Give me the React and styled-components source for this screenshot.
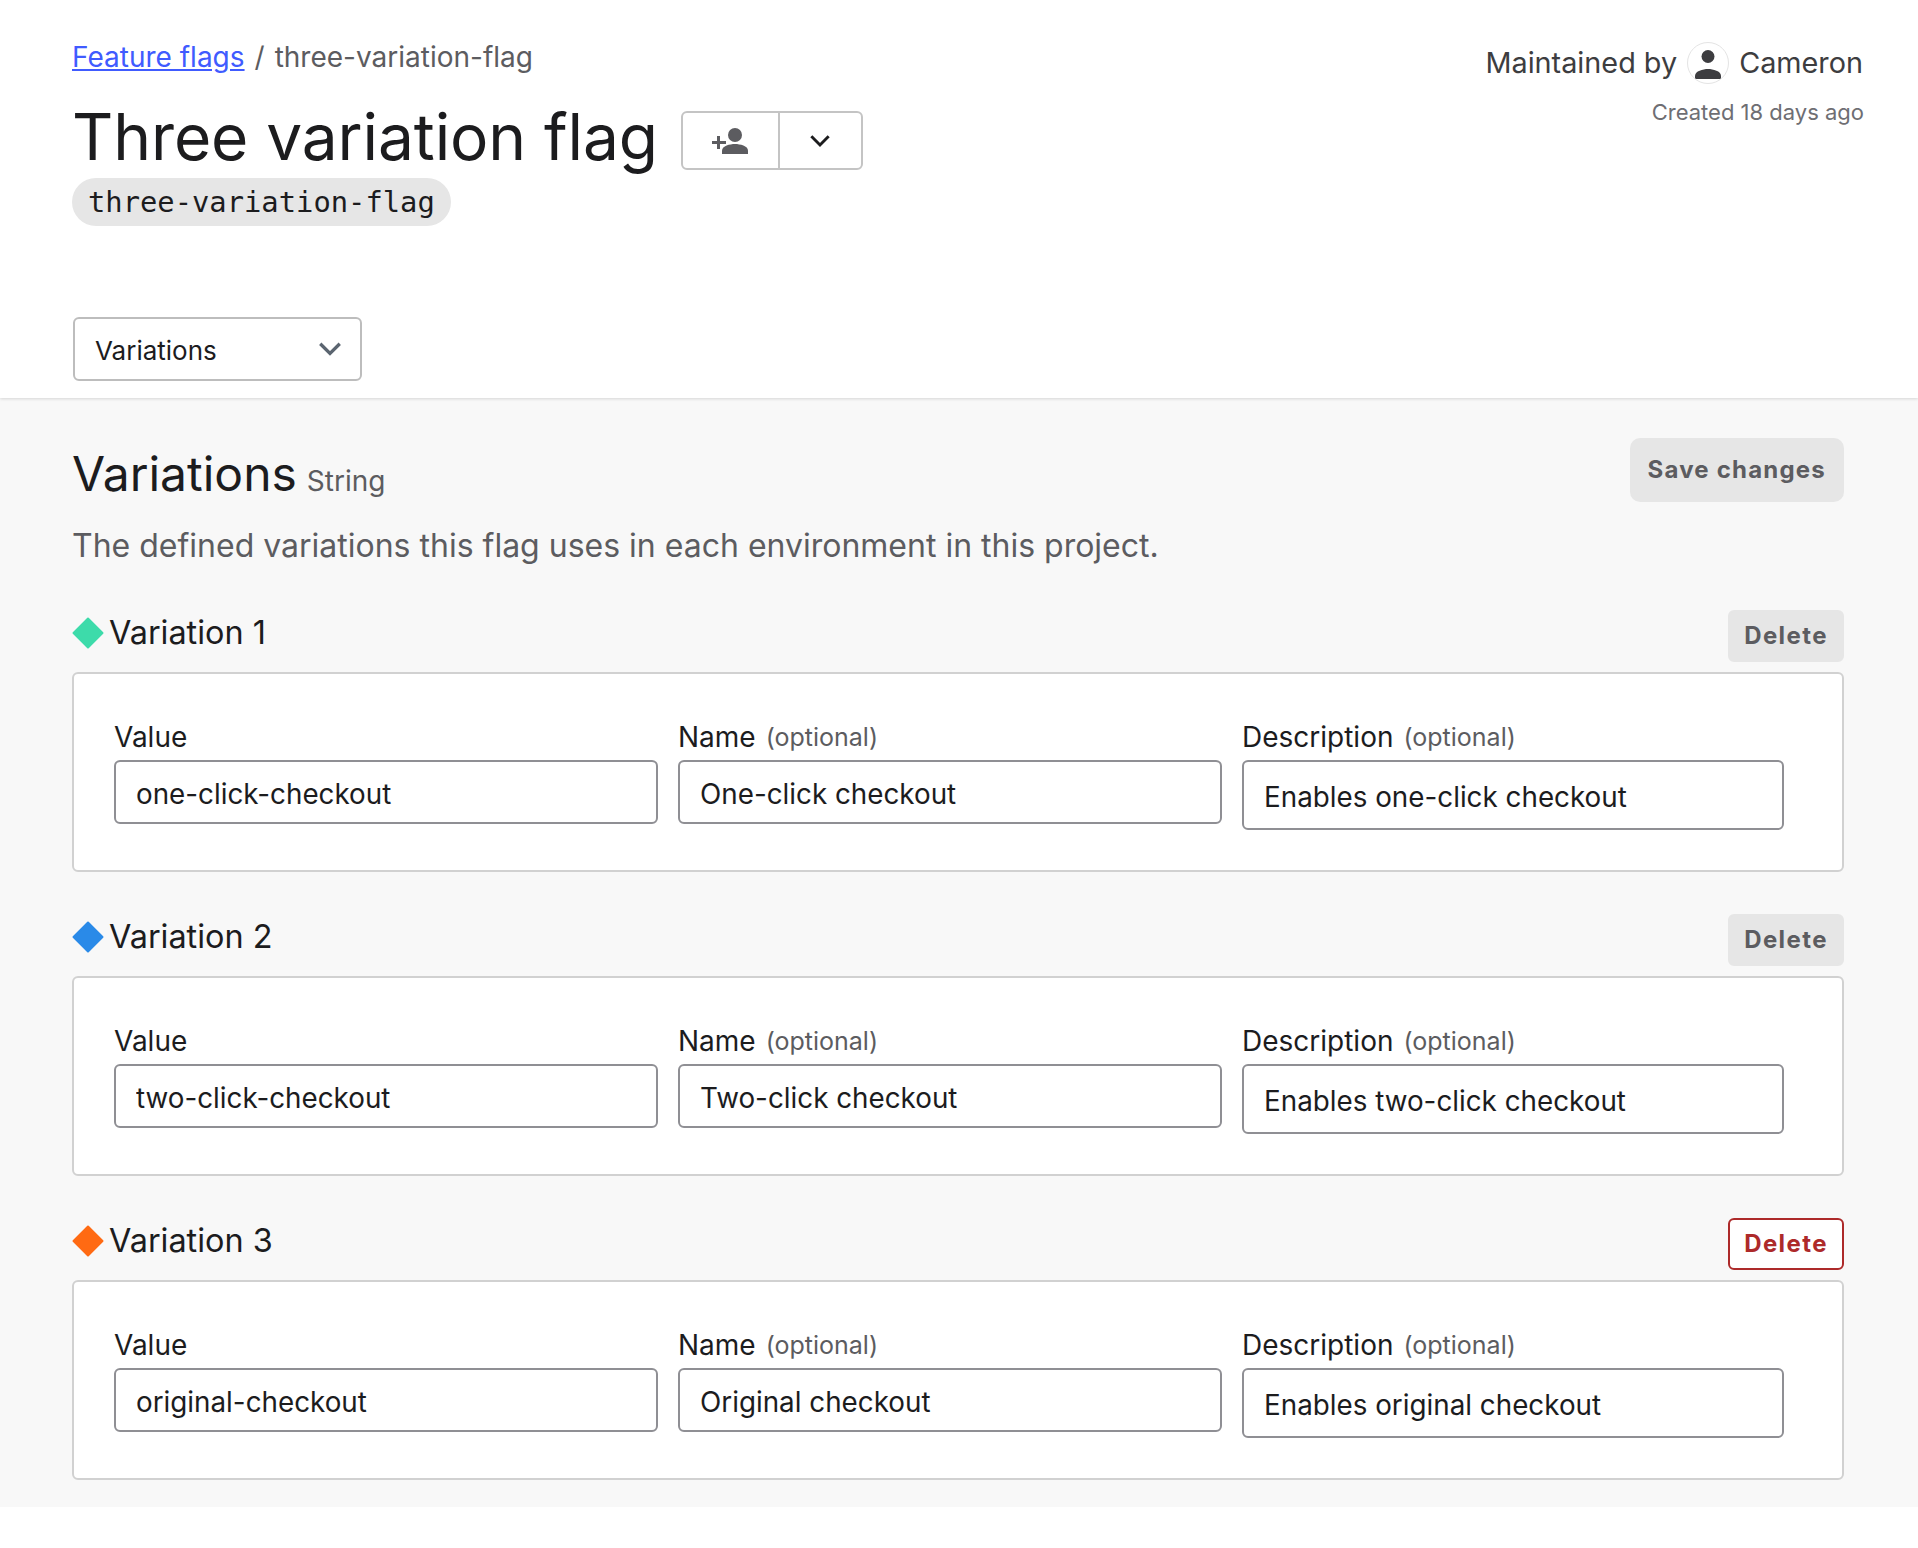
import React from 'react';
import styled, { createGlobalStyle } from 'styled-components';

const GlobalStyle = createGlobalStyle`
  body {
    margin: 0;
    background: #fff;
    color: #1c1c1e;
    font-family: Inter, "Noto Sans", sans-serif;
  }
`
const Page = styled.div`
  min-height: 1548px;
  background: #fff;
`
const Header = styled.header`
  position: relative;
  display: flex;
  justify-content: space-between;
  align-items: flex-start;
  height: 398px;
  box-sizing: border-box;
  padding: 37px 54px 0 72px;
  background: #fff;
  box-shadow: 0 1px 3px rgba(0, 0, 0, 0.14);
`
const HeaderMain = styled.div`
  display: flex;
  flex-direction: column;
  align-items: flex-start;
`
const Breadcrumb = styled.nav`
  font-size: 28px;
  line-height: 40px;
  color: #5c5c60;

  a {
    color: #405bff;
    text-decoration: underline;
  }

  span {
    margin: 0 10px;
  }
`
const TitleRow = styled.div`
  display: flex;
  align-items: flex-start;
  margin-top: 21px;
`
const Title = styled.h1`
  margin: 0;
  font-size: 64px;
  font-weight: 400;
  line-height: 78px;
  letter-spacing: -0.1px;
  color: #1c1c1e;
`
const ButtonGroup = styled.div`
  display: flex;
  height: 59px;
  box-sizing: border-box;
  margin: 13px 0 0 23px;
  border: 2px solid #c4c4c4;
  border-radius: 6px;
  background: #fff;
`
const GroupButton = styled.div`
  display: flex;
  align-items: center;
  justify-content: center;
  width: ${(p) => p.$width}px;
  border-left: ${(p) => (p.$divided ? '2px solid #c4c4c4' : 'none')};
  color: #5c5c60;
`
const FlagKey = styled.code`
  display: block;
  margin-top: 2px;
  padding: 0 16px;
  height: 48px;
  line-height: 48px;
  border-radius: 24px;
  background: #e6e6e6;
  font-family: "DejaVu Sans Mono", monospace;
  font-size: 28.8px;
  color: #1c1c1e;
`
const Select = styled.div`
  display: flex;
  align-items: center;
  justify-content: space-between;
  width: 289px;
  height: 64px;
  box-sizing: border-box;
  margin: 91px 0 0 1px;
  padding: 0 12px 0 20px;
  border: 2px solid #bdbdbd;
  border-radius: 6px;
  font-size: 26px;
  color: #1c1c1e;

  span {
    padding-top: 3px;
  }
`
const Meta = styled.div`
  display: flex;
  flex-direction: column;
  align-items: flex-end;
`
const Maintainer = styled.div`
  display: flex;
  align-items: center;
  gap: 10px;
  margin: 5px 1px 0 0;
  font-size: 28.8px;
  line-height: 42px;
  color: #3d3d40;
`
const Avatar = styled.div`
  width: 40px;
  height: 40px;
  border: 1px solid #e4e4e4;
  border-radius: 50%;
  overflow: hidden;
`
const Created = styled.div`
  margin-top: 12px;
  font-size: 22px;
  line-height: 32px;
  color: #6e6e73;
`
const Section = styled.main`
  height: 1109px;
  box-sizing: border-box;
  padding: 40px 74px 0 72px;
  background: #f8f8f8;
`
const SectionTop = styled.div`
  display: flex;
  justify-content: space-between;
  align-items: flex-start;
`
const SectionTitle = styled.h2`
  margin: 4px 0 0;
  font-size: 48px;
  font-weight: 400;
  line-height: 64px;
  color: #1c1c1e;

  small {
    margin-left: 10px;
    font-size: 28px;
    color: #5c5c60;
  }
`
const SaveButton = styled.div`
  height: 64px;
  line-height: 64px;
  padding: 0 18px;
  border-radius: 10px;
  background: #e6e6e6;
  color: #5c5c60;
  font-size: 24px;
  font-weight: 700;
  letter-spacing: 1.2px;
`
const Lead = styled.p`
  margin: 12px 0 0;
  font-size: 32px;
  line-height: 42px;
  color: #5c5c60;
`
const Variation = styled.section`
  margin-top: ${(p) => (p.$first ? '43px' : '42px')};
`
const VariationHead = styled.div`
  display: flex;
  justify-content: space-between;
  align-items: center;
  height: 52px;
  margin-bottom: 10px;
`
const VariationName = styled.h3`
  display: flex;
  align-items: center;
  gap: 5px;
  margin: -7px 0 0;
  font-size: 32.4px;
  font-weight: 400;
  color: #1c1c1e;
`
const DeleteButton = styled.div`
  height: 52px;
  box-sizing: border-box;
  width: 116px;
  line-height: 48px;
  text-align: center;
  border-radius: 6px;
  border: 2px solid ${(p) => (p.$danger ? '#ad2a2a' : '#e6e6e6')};
  background: ${(p) => (p.$danger ? '#fff' : '#e6e6e6')};
  color: ${(p) => (p.$danger ? '#ad2a2a' : '#5c5c60')};
  font-size: 24px;
  font-weight: 700;
  letter-spacing: 1.4px;
`
const Panel = styled.div`
  display: grid;
  grid-template-columns: 544px 544px 542px;
  column-gap: 20px;
  align-items: start;
  height: 200px;
  box-sizing: border-box;
  padding: 40px 0 0 40px;
  border: 2px solid #d1d1d1;
  border-radius: 6px;
  background: #fff;
`
const Field = styled.label`
  display: block;
`
const FieldLabel = styled.div`
  display: flex;
  align-items: center;
  gap: 10px;
  height: 46px;
  font-size: 28px;
  line-height: 44px;
  color: #1c1c1e;

  small {
    font-size: 25px;
    color: #5c5c60;
  }
`
const TextInput = styled.input`
  display: block;
  width: 100%;
  height: ${(p) => (p.$tall ? 70 : 64)}px;
  box-sizing: border-box;
  padding: 3px 20px 0;
  border: 2px solid #8f8f94;
  border-radius: 6px;
  background: #fff;
  font-family: Inter, "Noto Sans", sans-serif;
  font-size: 27.8px;
  color: #1c1c1e;
  outline: none;
`

const Chevron = ({ color = 'currentColor', size = 32 }) => (
  <svg width={size} height={size} viewBox="0 0 24 24" fill="none">
    <path d="M5.5 8.500 12 15l6.500-6.500" stroke={color} strokeWidth="2.200" />
  </svg>
)

const AddPerson = () => (
  <svg width="36" height="26" viewBox="0 0 36 26" fill="#5c5c60">
    <circle cx="23" cy="7" r="7" />
    <path d="M10 26v-3.500c0-4.500 8-6.500 13-6.500s13 2 13 6.500V26z" />
    <path d="M5 8h3v5h6v3H8v5H5v-5H0v-3h5z" />
  </svg>
)

const Person = () => (
  <svg width="40" height="40" viewBox="0 0 40 40" fill="#3d3d40">
    <circle cx="20" cy="13.500" r="6.500" />
    <path d="M7 36v-3c0-5 8-7 13-7s13 2 13 7v3z" />
  </svg>
)

const Diamond = ({ color }) => (
  <svg width="32" height="32" viewBox="0 0 32 32">
    <path
      d="M16 1.500 30.500 16 16 30.500 1.500 16z"
      fill={color}
      stroke={color}
      strokeWidth="2"
      strokeLinejoin="round"
    />
  </svg>
)

const variations = [
  { label: 'Variation 1', color: '#3ddbaa', value: 'one-click-checkout', name: 'One-click checkout', description: 'Enables one-click checkout' },
  { label: 'Variation 2', color: '#2a8ae8', value: 'two-click-checkout', name: 'Two-click checkout', description: 'Enables two-click checkout' },
  { label: 'Variation 3', color: '#ff6a13', value: 'original-checkout', name: 'Original checkout', description: 'Enables original checkout', danger: true },
]

export default function App() {
  return (
    <Page>
      <GlobalStyle />
      <Header>
        <HeaderMain>
          <Breadcrumb>
            <a href="#flags">Feature flags</a>
            <span>/</span>
            three-variation-flag
          </Breadcrumb>
          <TitleRow>
            <Title>Three variation flag</Title>
            <ButtonGroup>
              <GroupButton $width={95}><AddPerson /></GroupButton>
              <GroupButton $width={81} $divided><Chevron color="#1c1c1e" /></GroupButton>
            </ButtonGroup>
          </TitleRow>
          <FlagKey>three-variation-flag</FlagKey>
          <Select>
            <span>Variations</span>
            <Chevron color="#5b6570" size={36} />
          </Select>
        </HeaderMain>
        <Meta>
          <Maintainer>
            Maintained by
            <Avatar><Person /></Avatar>
            Cameron
          </Maintainer>
          <Created>Created 18 days ago</Created>
        </Meta>
      </Header>
      <Section>
        <SectionTop>
          <SectionTitle>Variations<small>String</small></SectionTitle>
          <SaveButton>Save changes</SaveButton>
        </SectionTop>
        <Lead>The defined variations this flag uses in each environment in this project.</Lead>
        {variations.map((v, i) => (
          <Variation key={v.label} $first={i === 0}>
            <VariationHead>
              <VariationName><Diamond color={v.color} />{v.label}</VariationName>
              <DeleteButton $danger={v.danger}>Delete</DeleteButton>
            </VariationHead>
            <Panel>
              <Field>
                <FieldLabel>Value</FieldLabel>
                <TextInput readOnly value={v.value} />
              </Field>
              <Field>
                <FieldLabel>Name <small>(optional)</small></FieldLabel>
                <TextInput readOnly value={v.name} />
              </Field>
              <Field>
                <FieldLabel>Description <small>(optional)</small></FieldLabel>
                <TextInput $tall readOnly value={v.description} />
              </Field>
            </Panel>
          </Variation>
        ))}
      </Section>
    </Page>
  );
}
